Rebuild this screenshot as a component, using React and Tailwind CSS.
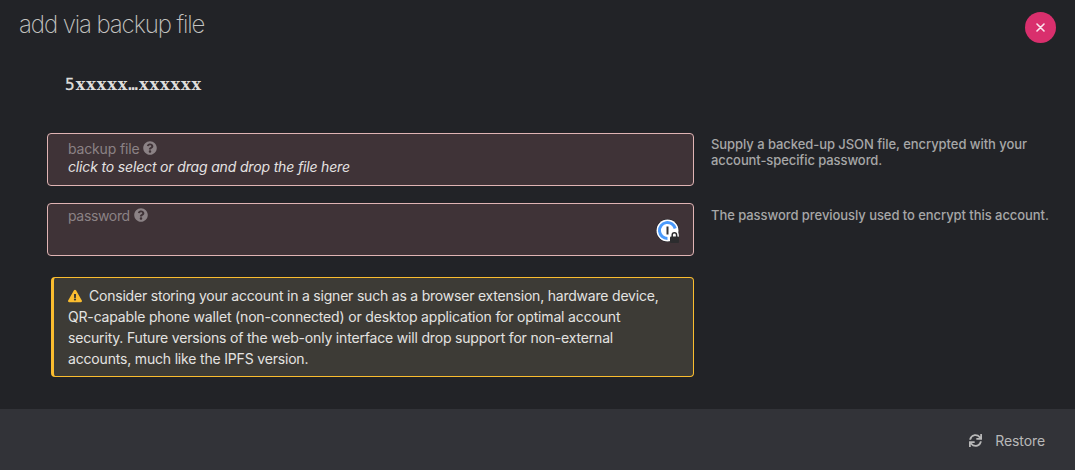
import { FaQuestionCircle, FaExclamationTriangle, FaSync } from 'react-icons/fa';

function Field({ label, labelClass, help, children, trailing }) {
  return (
    <div className="flex items-start">
      <div className="flex h-[53px] w-[647px] shrink-0 items-center justify-between rounded-[4px] border border-[#e0b4b4] bg-[#3f3337] pl-5 pr-[13px]">
        <div className="flex h-full flex-col">
          <div className={labelClass}>
            <span>{label}</span>
            <FaQuestionCircle className="mb-0.5 size-[14px]" />
          </div>
          {children}
        </div>
        {trailing}
      </div>
      <div className="ml-[17px] pt-[3px] text-[13px] font-[450] leading-4 text-[#a7a7a7]">{help}</div>
    </div>
  );
}

function PasswordManagerIcon() {
  return (
    <svg className="size-6 mt-[2px]" viewBox="0 0 24 24">
      <circle cx="11.5" cy="11.5" r="11.5" fill="#232127" />
      <circle cx="11.5" cy="11.5" r="11" fill="#fff" />
      <path d="M11.5 19.5A8 8 0 1 1 19.2 9.5" fill="none" stroke="#4a9afc" strokeWidth="3" />
      <path d="M11.5 7.5v8" stroke="#343337" strokeWidth="2" />
      <path d="M15.5 18v-2.2a2.9 2.9 0 0 1 5.8 0V18" fill="none" stroke="#fff" strokeWidth="3" />
      <path d="M16.2 18v-2.1a2.2 2.2 0 0 1 4.4 0V18" fill="none" stroke="#2c2c2e" strokeWidth="1.5" />
      <rect x="14" y="17.5" width="9" height="6.5" rx="1" fill="#2c2c2e" />
    </svg>
  );
}

export default function App() {
  return (
    <div className="flex h-[470px] w-[1075px] flex-col overflow-hidden bg-[#222327] font-['Inter',sans-serif] whitespace-nowrap">
      <header className="flex h-[54px] items-start justify-between pl-[19px] pr-[19px]">
        <h1 className="mt-[9px] text-[24px] font-[250] leading-8 tracking-[-1.1px] text-[#c4c3c1]">add via backup file</h1>
        <button className="mt-[12px] flex size-[31px] items-center justify-center rounded-full bg-[#d92f6d] text-[#fbe4ee]">
          <svg className="size-[9px]" viewBox="0 0 9 9" fill="none" stroke="currentColor" strokeWidth="1.6" strokeLinecap="round">
            <path d="M1 1l7 7M8 1L1 8" />
          </svg>
        </button>
      </header>
      <main className="flex h-[355px] flex-col pl-[47px]">
        <div className="mt-[21px] flex h-[20px] items-baseline pl-[18px] font-bold leading-5 text-[#dfdedc]">
          <span className="font-['DejaVu_Sans_Mono',monospace] text-[16px] font-normal tracking-[1px] [-webkit-text-stroke:0.3px_currentColor]">5</span>
          <span className="font-['DejaVu_Serif',serif] text-[16px] tracking-[1px]">xxxxx</span>
          <span className="font-['DejaVu_Sans_Mono',monospace] text-[16px] tracking-[0.9px]">…</span>
          <span className="font-['DejaVu_Serif',serif] text-[16px] tracking-[1px]">xxxxxx</span>
        </div>
        <div className="mt-[38px] flex flex-col gap-[17px]">
          <Field
            label="backup file"
            labelClass="flex h-[18px] mt-[6px] items-center gap-1 text-[14px] leading-[18px] text-[#8b8285] tracking-[-0.16px]"
            help={
              <>
                <p className="tracking-[-0.06px]">Supply a backed-up JSON file, encrypted with your</p>
                <p className="tracking-[-0.09px]">account-specific password.</p>
              </>
            }
          >
            <p className="text-[14px] font-[450] italic leading-[18px] tracking-[-0.16px] text-[#e5e2e2]">click to select or drag and drop the file here</p>
          </Field>
          <Field
            label="password"
            labelClass="flex h-[18px] mt-[3px] items-center gap-1 text-[14px] leading-[18px] text-[#8b8285] tracking-[-0.34px]"
            help={<p className="pt-px tracking-[-0.06px]">The password previously used to encrypt this account.</p>}
            trailing={<PasswordManagerIcon />}
          />
        </div>
        <div className="ml-1 mt-[21px] h-[100px] w-[643px] rounded-[4px] border border-l-[3px] border-[#fbbd2f] bg-[#3d3b36] pl-[14px] pt-[7px] text-[14px] font-normal leading-[21px] text-[#e4e3e1]">
          <p className="flex items-center gap-[7px] tracking-[-0.21px]">
            <FaExclamationTriangle className="size-[14px] text-[#fbbd2f]" />
            <span>Consider storing your account in a signer such as a browser extension, hardware device,</span>
          </p>
          <p className="tracking-[-0.17px]">QR-capable phone wallet (non-connected) or desktop application for optimal account</p>
          <p className="tracking-[-0.18px]">security. Future versions of the web-only interface will drop support for non-external</p>
          <p className="tracking-[-0.18px]">accounts, much like the IPFS version.</p>
        </div>
      </main>
      <footer className="flex h-[61px] items-center justify-end bg-[#323338] pr-[30px] pt-[2px] text-[14px] text-[#b8b8b8]">
        <button className="flex items-center gap-[13px]">
          <FaSync className="size-[13px]" />
          <span className="tracking-[-0.1px]">Restore</span>
        </button>
      </footer>
    </div>
  );
}
